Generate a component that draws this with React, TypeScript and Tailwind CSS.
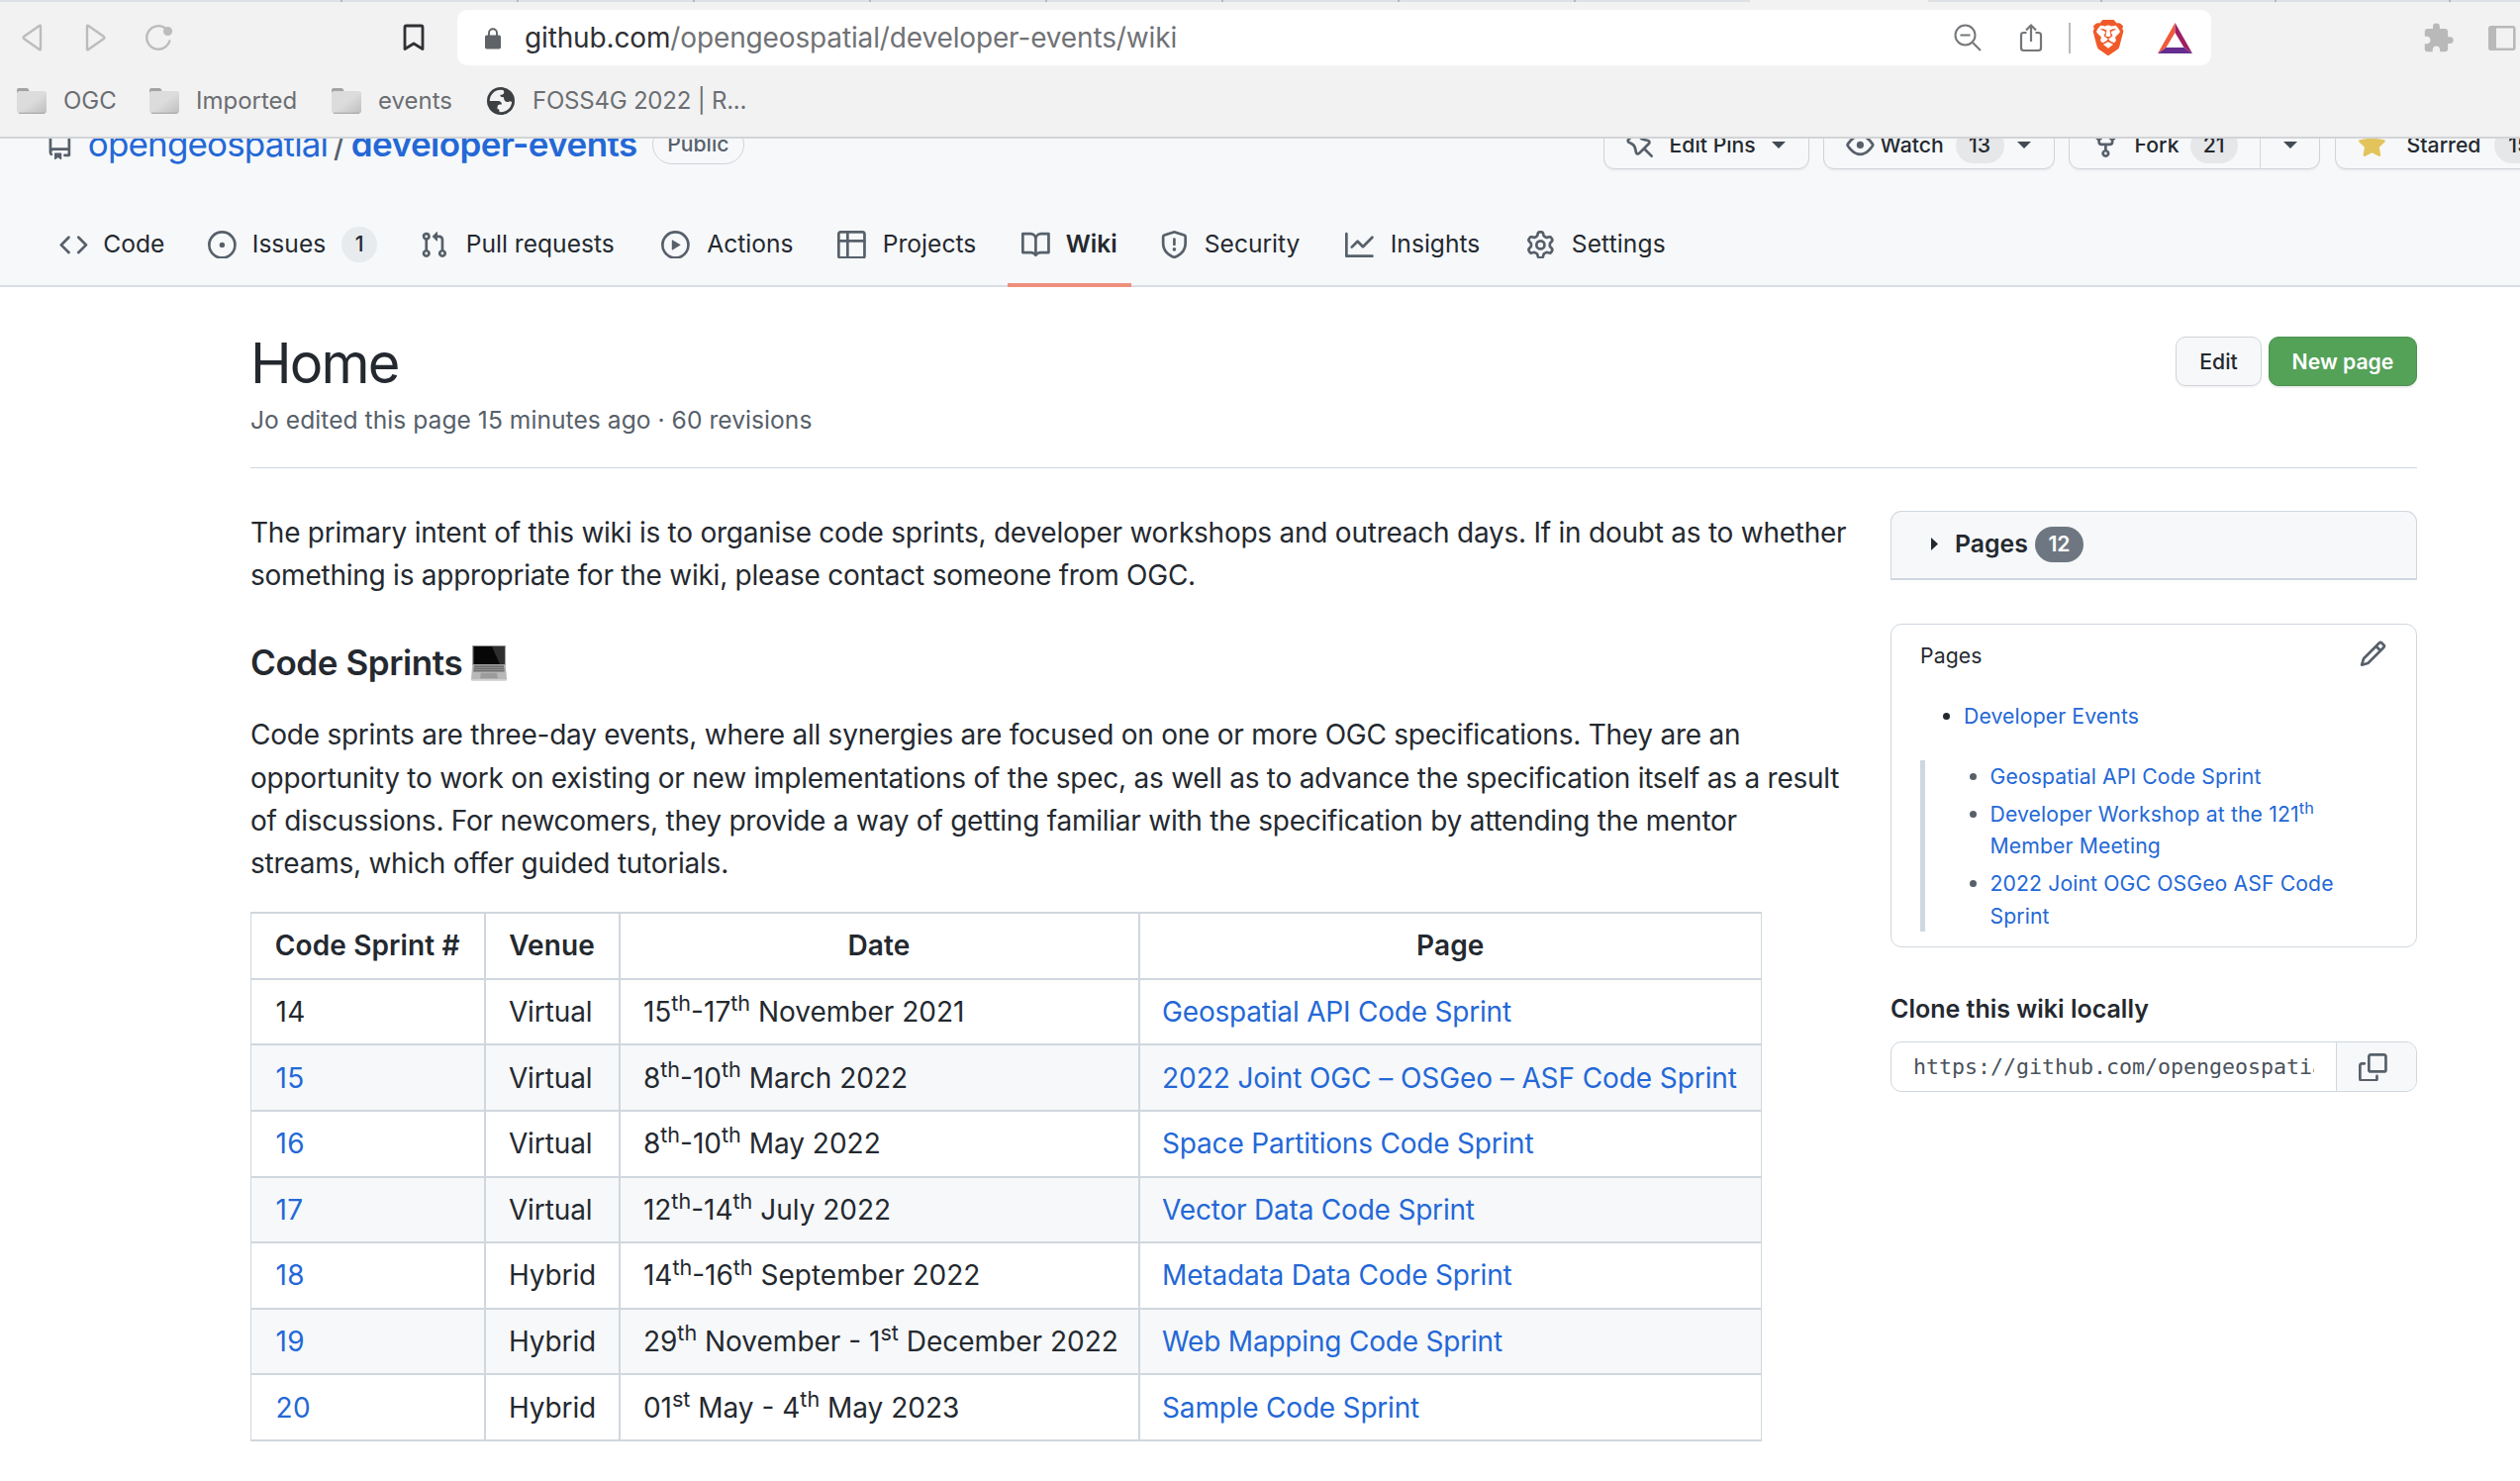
import React from "react";
import { SiBrave } from "react-icons/si";
import { MdExtension } from "react-icons/md";

const P = {
  code: "M4.72 3.22a.75.75 0 011.06 1.06L2.06 8l3.72 3.72a.75.75 0 11-1.06 1.06L.47 8.53a.75.75 0 010-1.06l4.25-4.25zm6.56 0a.75.75 0 10-1.06 1.06L13.94 8l-3.72 3.72a.75.75 0 101.06 1.06l4.25-4.25a.75.75 0 000-1.06l-4.25-4.25z",
  issue: "M8 9.5a1.5 1.5 0 100-3 1.5 1.5 0 000 3zM8 0a8 8 0 100 16A8 8 0 008 0zM1.5 8a6.5 6.5 0 1113 0 6.5 6.5 0 01-13 0z",
  pull: "M7.177 3.073L9.573.677A.25.25 0 0110 .854v4.792a.25.25 0 01-.427.177L7.177 3.427a.25.25 0 010-.354zM3.75 2.5a.75.75 0 100 1.5.75.75 0 000-1.5zm-2.25.75a2.25 2.25 0 113 2.122v5.256a2.251 2.251 0 11-1.5 0V5.372A2.25 2.25 0 011.5 3.25zM11 2.5h-1V4h1a1 1 0 011 1v5.628a2.251 2.251 0 101.5 0V5A2.5 2.5 0 0011 2.5zm1 10.25a.75.75 0 111.5 0 .75.75 0 01-1.5 0zM3.75 12a.75.75 0 100 1.5.75.75 0 000-1.5z",
  play: "M1.5 8a6.5 6.5 0 1113 0 6.5 6.5 0 01-13 0zM8 0a8 8 0 100 16A8 8 0 008 0zM6.379 5.227A.25.25 0 006 5.442v5.117a.25.25 0 00.379.214l4.264-2.559a.25.25 0 000-.428L6.379 5.227z",
  table: "M0 1.75C0 .784.784 0 1.75 0h12.5C15.216 0 16 .784 16 1.75v3.585a.746.746 0 010 .83v8.085A1.75 1.75 0 0114.25 16H6.309a.748.748 0 01-1.118 0H1.75A1.75 1.75 0 010 14.25V6.165a.746.746 0 010-.83V1.75zM1.5 6.5v7.75c0 .138.112.25.25.25H5v-8H1.5zM5 5H1.5V1.75a.25.25 0 01.25-.25H5V5zm1.5 1.5v8h7.75a.25.25 0 00.25-.25V6.5h-8zm8-1.5h-8V1.5h7.75a.25.25 0 01.25.25V5z",
  book: "M0 1.75A.75.75 0 01.75 1h4.253c1.227 0 2.317.59 3 1.501A3.744 3.744 0 0111.006 1h4.245a.75.75 0 01.75.75v10.5a.75.75 0 01-.75.75h-4.507a2.25 2.25 0 00-1.591.659l-.622.621a.75.75 0 01-1.06 0l-.622-.621A2.25 2.25 0 005.258 13H.75a.75.75 0 01-.75-.75V1.75zm8.755 3a2.25 2.25 0 012.25-2.25H14.5v9h-3.757c-.71 0-1.4.201-1.992.572l.004-7.322zm-1.504 7.324l.004-5.073-.002-2.253A2.25 2.25 0 005.003 2.5H1.5v9h3.757a3.75 3.75 0 011.994.574z",
  shield: "M7.467.133a1.75 1.75 0 011.066 0l5.25 1.68A1.75 1.75 0 0115 3.48V7c0 1.566-.32 3.182-1.303 4.682-.983 1.498-2.585 2.813-5.032 3.855a1.7 1.7 0 01-1.33 0c-2.447-1.042-4.049-2.357-5.032-3.855C1.32 10.182 1 8.566 1 7V3.48a1.75 1.75 0 011.217-1.667l5.25-1.68zm.61 1.429a.25.25 0 00-.153 0l-5.25 1.68a.25.25 0 00-.174.238V7c0 1.358.275 2.666 1.057 3.86.784 1.194 2.121 2.34 4.366 3.297a.2.2 0 00.154 0c2.245-.956 3.582-2.104 4.366-3.298C13.225 9.666 13.5 8.36 13.5 7V3.48a.25.25 0 00-.174-.237l-5.25-1.68zM9 10.5a1 1 0 11-2 0 1 1 0 012 0zm-.25-5.75a.75.75 0 10-1.5 0v3a.75.75 0 001.5 0v-3z",
  graph: "M1.5 1.75a.75.75 0 00-1.5 0v12.5c0 .414.336.75.75.75h14.5a.75.75 0 000-1.5H1.5V1.75zm14.28 2.53a.75.75 0 00-1.06-1.06L10 7.94 7.53 5.47a.75.75 0 00-1.06 0L3.22 8.72a.75.75 0 001.06 1.06L7 7.06l2.47 2.47a.75.75 0 001.06 0l5.25-5.25z",
  gear: "M7.429 1.525a6.593 6.593 0 011.142 0c.036.003.108.036.137.146l.289 1.105c.147.56.55.967.997 1.189.174.086.341.183.501.29.417.278.97.423 1.53.27l1.102-.303c.11-.03.175.016.195.046.219.31.41.641.573.989.014.031.022.11-.059.19l-.815.806c-.411.406-.562.957-.53 1.456a4.588 4.588 0 010 .582c-.032.499.119 1.05.53 1.456l.815.806c.08.08.073.159.059.19a6.494 6.494 0 01-.573.99c-.02.029-.086.074-.195.045l-1.103-.303c-.559-.153-1.112-.008-1.529.27-.16.107-.327.204-.5.29-.449.222-.851.628-.998 1.189l-.289 1.105c-.029.11-.101.143-.137.146a6.613 6.613 0 01-1.142 0c-.036-.003-.108-.037-.137-.146l-.289-1.105c-.147-.56-.55-.967-.997-1.189a4.502 4.502 0 01-.501-.29c-.417-.278-.97-.423-1.53-.27l-1.102.303c-.11.03-.175-.016-.195-.046a6.492 6.492 0 01-.573-.989c-.014-.031-.022-.11.059-.19l.815-.806c.411-.406.562-.957.53-1.456a4.587 4.587 0 010-.582c.032-.499-.119-1.05-.53-1.456l-.815-.806c-.08-.08-.073-.159-.059-.19a6.44 6.44 0 01.573-.99c.02-.029.086-.075.195-.045l1.103.303c.559.153 1.112.008 1.529-.27.16-.107.327-.204.5-.29.449-.222.851-.628.998-1.189l.289-1.105c.029-.11.101-.143.137-.146zM8 0c-.236 0-.47.01-.701.03-.743.065-1.29.615-1.458 1.261l-.29 1.106c-.017.066-.078.158-.211.224a5.994 5.994 0 00-.668.386c-.123.082-.233.09-.3.071L3.27 2.776c-.644-.177-1.392.02-1.82.63a7.977 7.977 0 00-.704 1.217c-.315.675-.111 1.422.363 1.891l.815.806c.05.048.098.147.088.294a6.084 6.084 0 000 .772c.01.147-.038.246-.088.294l-.815.806c-.474.469-.678 1.216-.363 1.891.2.428.436.835.704 1.218.428.609 1.176.806 1.82.63l1.103-.303c.066-.019.176-.011.299.071.213.143.436.272.668.386.133.066.194.158.212.224l.289 1.106c.169.646.715 1.196 1.458 1.26a8.094 8.094 0 001.402 0c.743-.064 1.29-.614 1.458-1.26l.29-1.106c.017-.066.078-.158.211-.224a5.98 5.98 0 00.668-.386c.123-.082.233-.09.3-.071l1.102.302c.644.177 1.392-.02 1.82-.63.268-.382.505-.789.704-1.217.315-.675.111-1.422-.364-1.891l-.814-.806c-.05-.048-.098-.147-.088-.294a6.1 6.1 0 000-.772c-.01-.147.039-.246.088-.294l.814-.806c.475-.469.679-1.216.364-1.891a7.992 7.992 0 00-.704-1.218c-.428-.609-1.176-.806-1.82-.63l-1.103.303c-.066.019-.176.011-.299-.071a5.991 5.991 0 00-.668-.386c-.133-.066-.194-.158-.212-.224L10.16 1.29C9.99.645 9.444.095 8.701.031A8.094 8.094 0 008 0zm1.5 8a1.5 1.5 0 11-3 0 1.5 1.5 0 013 0zM11 8a3 3 0 11-6 0 3 3 0 016 0z",
  pencil: "M11.013 1.427a1.75 1.75 0 012.474 0l1.086 1.086a1.75 1.75 0 010 2.474l-8.61 8.61c-.21.21-.47.364-.756.445l-3.251.93a.75.75 0 01-.927-.928l.929-3.25a1.75 1.75 0 01.445-.758l8.61-8.61zm1.414 1.06a.25.25 0 00-.354 0L10.811 3.75l1.439 1.44 1.263-1.263a.25.25 0 000-.354l-1.086-1.086zM11.189 6.25L9.75 4.81l-6.286 6.287a.25.25 0 00-.064.108l-.558 1.953 1.953-.558a.249.249 0 00.108-.064l6.286-6.286z",
  copy: "M0 6.75C0 5.784.784 5 1.75 5h1.5a.75.75 0 010 1.5h-1.5a.25.25 0 00-.25.25v7.5c0 .138.112.25.25.25h7.5a.25.25 0 00.25-.25v-1.5a.75.75 0 011.5 0v1.5A1.75 1.75 0 019.25 16h-7.5A1.75 1.75 0 010 14.25v-7.5zM5 1.75C5 .784 5.784 0 6.75 0h7.5C15.216 0 16 .784 16 1.75v7.5A1.75 1.75 0 0114.25 11h-7.5A1.75 1.75 0 015 9.25v-7.5zm1.75-.25a.25.25 0 00-.25.25v7.5c0 .138.112.25.25.25h7.5a.25.25 0 00.25-.25v-7.5a.25.25 0 00-.25-.25h-7.5z",
  eye: "M1.679 7.932c.412-.621 1.242-1.75 2.366-2.717C5.175 4.242 6.527 3.5 8 3.5c1.473 0 2.824.742 3.955 1.715 1.124.967 1.954 2.096 2.366 2.717a.119.119 0 010 .136c-.412.621-1.242 1.75-2.366 2.717C10.825 11.758 9.473 12.5 8 12.5c-1.473 0-2.824-.742-3.955-1.715C2.92 9.818 2.09 8.69 1.679 8.068a.119.119 0 010-.136zM8 2c-1.981 0-3.67.992-4.933 2.078C1.797 5.169.88 6.423.43 7.1a1.619 1.619 0 000 1.798c.45.678 1.367 1.932 2.637 3.024C4.329 13.008 6.019 14 8 14c1.981 0 3.67-.992 4.933-2.078 1.27-1.091 2.187-2.345 2.637-3.023a1.619 1.619 0 000-1.798c-.45-.678-1.367-1.932-2.637-3.023C11.671 2.992 9.981 2 8 2zm0 8a2 2 0 100-4 2 2 0 000 4z",
  pin: "M4.456.734a1.75 1.75 0 012.826.504l.613 1.327a3.081 3.081 0 002.084 1.707l2.454.584c1.332.317 1.8 1.972.832 2.94L11.06 10l3.72 3.72a.75.75 0 11-1.061 1.06L10 11.06l-2.204 2.205c-.968.968-2.623.5-2.94-.832l-.584-2.454a3.081 3.081 0 00-1.707-2.084l-1.327-.613a1.75 1.75 0 01-.504-2.826L4.456.734zM5.92 1.866a.25.25 0 00-.404-.072L1.794 5.516a.25.25 0 00.072.404l1.328.613A4.582 4.582 0 015.73 9.63l.584 2.454a.25.25 0 00.42.12l5.47-5.47a.25.25 0 00-.12-.42L9.63 5.73a4.581 4.581 0 01-3.098-2.537L5.92 1.866z",
  fork: "M5 3.25a.75.75 0 11-1.5 0 .75.75 0 011.5 0zm0 2.122a2.25 2.25 0 10-1.5 0v.878A2.25 2.25 0 005.75 8.5h1.5v2.128a2.251 2.251 0 101.5 0V8.5h1.5a2.25 2.25 0 002.25-2.25v-.878a2.25 2.25 0 10-1.5 0v.878a.75.75 0 01-.75.75h-4.5A.75.75 0 015 6.25v-.878zm3.75 7.378a.75.75 0 11-1.5 0 .75.75 0 011.5 0zm3-8.75a.75.75 0 100-1.5.75.75 0 000 1.5z",
  star: "M8 .25a.75.75 0 01.673.418l1.882 3.815 4.21.612a.75.75 0 01.416 1.279l-3.046 2.97.719 4.192a.75.75 0 01-1.088.791L8 12.347l-3.766 1.98a.75.75 0 01-1.088-.79l.72-4.194L.818 6.374a.75.75 0 01.416-1.28l4.21-.611L7.327.668A.75.75 0 018 .25z",
  repo: "M2 2.5A2.5 2.5 0 014.5 0h8.75a.75.75 0 01.75.75v12.5a.75.75 0 01-.75.75h-2.5a.75.75 0 110-1.5h1.75v-2h-8a1 1 0 00-.714 1.7.75.75 0 01-1.072 1.05A2.495 2.495 0 012 11.5v-9zm10.5-1V9h-8c-.356 0-.694.074-1 .208V2.5a1 1 0 011-1h8zM5 12.25v3.25a.25.25 0 00.4.2l1.45-1.087a.25.25 0 01.3 0L8.6 15.7a.25.25 0 00.4-.2v-3.25a.25.25 0 00-.25-.25h-3.5a.25.25 0 00-.25.25z",
};

function Oct({ d, className = "fill-[#57606a]" }: { d: string; className?: string }) {
  return (
    <svg viewBox="0 0 16 16" className={"size-[28.8px] shrink-0 " + className}>
      <path fillRule="evenodd" d={d} />
    </svg>
  );
}

function Caret({ className = "" }: { className?: string }) {
  return (
    <svg viewBox="0 0 14 7" className={"h-[7px] w-[14px] shrink-0 fill-[#424a53] " + className}>
      <path d="M0 0h14L7 7z" />
    </svg>
  );
}

function Folder() {
  return (
    <svg viewBox="0 0 32 28" className="h-[28px] w-[32px] shrink-0">
      <defs>
        <linearGradient id="fold" x1="0" y1="0" x2="1" y2="1">
          <stop offset="0" stopColor="#dcdcdc" />
          <stop offset=".5" stopColor="#dcdcdc" />
          <stop offset="1" stopColor="#bebebe" />
        </linearGradient>
      </defs>
      <path d="M1 6V3q0-2 2-2h8q1.500 0 2 1.500l.5 1.500V8H1z" fill="#a3a3a3" />
      <rect x="1" y="4" width="30" height="22.500" rx="2.500" fill="url(#fold)" />
      <path d="M3 26.300h26" stroke="#a8a8a8" strokeWidth="1.200" />
    </svg>
  );
}

function Globe() {
  return (
    <svg viewBox="0 0 28 28" className="size-[28px] shrink-0">
      <circle cx="14" cy="14" r="14" fill="#3c4043" />
      <circle cx="14" cy="14" r="11.200" fill="#f2f2f2" />
      <path d="M16.300 2.500l1 2.500q-.2 2.500-2.300 2.700h-1.500q-.5 2.300 1.500 2.300l2 .3q0 3.700 2.500 4.500 2.500.7 3.500-.5l2.500.7 1-4-4-7z" fill="#3c4043" />
      <path d="M2 14h9.500q3.200.2 3.500 3.500h-2.200q-2.300.2-2.300 2.700v2h1.500l1 4.300-6-1.500-5-7z" fill="#3c4043" />
    </svg>
  );
}

const seps = [
  "w-[344px]", "w-[176px]", "w-[176px]", "w-[176px]", "w-[176px]", "w-[176px]", "w-[176px]", "w-[176px]",
];

function BrowserChrome() {
  return (
    <div className="flex h-[140px] flex-col border-b-2 border-[#d2d4d7] bg-[#f2f2f2] text-[#6b6e72]">
      <div className="flex h-[2px] shrink-0 bg-[#dee1e5]">
        {seps.map((w, i) => (
          <div key={i} className={"box-content shrink-0 border-r-2 border-[#b4b8bd] " + w} />
        ))}
        <div className="w-[176px] shrink-0" />
        <div className="w-[180px] shrink-0 bg-[#f2f2f2]" />
        <div className="box-content w-[174px] shrink-0 border-r-2 border-[#b4b8bd]" />
        <div className="box-content w-[174px] shrink-0 border-r-2 border-[#b4b8bd]" />
        <div className="box-content w-[174px] shrink-0 border-r-2 border-[#b4b8bd]" />
      </div>
      <div className="flex h-[72px] shrink-0 items-center">
        <svg viewBox="0 0 180 30" className="ml-[20px] h-[30px] w-[180px] shrink-0 fill-none stroke-[#bcbcbc] stroke-[2.4]">
          <path d="M21 3.500v23q0 1.500-1.200.500L4 16q-1-1 0-2L19.800 3q1.200-1 1.200.500z" strokeLinejoin="round" />
          <path d="M68 3.500v23q0 1.500 1.200.500L85 16q1-1 0-2L69.200 3q-1.200-1-1.200.500z" strokeLinejoin="round" />
          <path d="M146.500 5.100A11.800 11.800 0 1 0 151.300 18.500" strokeLinecap="round" />
          <circle cx="149.500" cy="8.500" r="4.600" fill="#bcbcbc" stroke="none" />
        </svg>
        <svg viewBox="0 0 22 28" className="ml-[207px] h-[28px] w-[22px] shrink-0 fill-none stroke-[#303134] stroke-[2.8]">
          <path d="M2 3.500Q2 2 3.500 2h15Q20 2 20 3.500V25.500l-9-5.500-9 5.500z" strokeLinejoin="round" />
        </svg>
        <div className="ml-[33px] flex h-[56px] w-[1772px] shrink-0 items-center rounded-[10px] bg-white">
          <svg viewBox="0 0 16 22" className="ml-[28px] mt-px h-[22px] w-[16px] shrink-0">
            <rect x="0" y="7.500" width="16" height="14" rx="1.800" fill="#5f6368" />
            <path d="M4 8.500V5.200a4 4 0 0 1 8 0v3.300" fill="none" stroke="#5f6368" strokeWidth="1.900" />
          </svg>
          <div className="ml-[24px] w-[1420px] shrink-0 text-[28px] tracking-[-0.14px]">
            <span className="text-[#2f3033]">github.com</span>
            <span className="text-[#707275]">/opengeospatial/developer-events/wiki</span>
          </div>
          <svg viewBox="0 0 28 28" className="ml-[24px] h-[28px] w-[28px] shrink-0 fill-none stroke-[#747679] stroke-2">
            <circle cx="11.500" cy="11.500" r="10" />
            <path d="M6.500 11.500h10M19 19l8 8" />
          </svg>
          <svg viewBox="0 0 24 30" className="ml-[38px] h-[30px] w-[24px] shrink-0 fill-none stroke-[#747679] stroke-[2.2]">
            <path d="M7.500 10H4.500Q2 10 2 12.500v13Q2 28 4.500 28h15q2.500 0 2.500-2.500v-13Q22 10 19.500 10h-3M12 19V3M7 7.500l5-5 5 5" />
          </svg>
          <div className="ml-[26px] h-[31px] w-[2px] shrink-0 bg-[#b9bbbe]" />
          <SiBrave className="ml-[20px] size-[36px] shrink-0 text-[#f05a28]" />
          <svg viewBox="0 0 35 31" className="ml-[32px] h-[31px] w-[35px] shrink-0">
            <path d="M17.500 0v10L8.500 25 0 31z" fill="#f05a3c" />
            <path d="M17.500 0v10l9 15 8.500 6z" fill="#9e1f63" />
            <path d="M0 31l8.500-6h18l8.500 6z" fill="#662d91" />
          </svg>
        </div>
        <MdExtension className="ml-[213px] size-[33px] shrink-0 text-[#b9b9b9]" />
        <svg viewBox="0 0 28 25" className="ml-[34px] h-[25px] w-[28px] shrink-0 fill-none stroke-[#b9b9b9] stroke-[2.6]">
          <rect x="1.300" y="1.300" width="25" height="22.400" rx="1.500" />
          <path d="M2 2h6v21H2z" fill="#b9b9b9" stroke="none" />
        </svg>
      </div>
      <div className="flex h-[56px] shrink-0 items-center text-[24px]">
        <div className="flex w-[134px] shrink-0 items-center gap-[16px] pl-[16px]"><Folder /><span>OGC</span></div>
        <div className="flex w-[184px] shrink-0 items-center gap-[16px] pl-[16px]"><Folder /><span>Imported</span></div>
        <div className="flex w-[173px] shrink-0 items-center gap-[16px] pl-[16px]"><Folder /><span>events</span></div>
        <div className="flex shrink-0 items-center gap-[18px] pl-px tracking-[-0.22px]"><Globe /><span>FOSS4G 2022 | R...</span></div>
      </div>
    </div>
  );
}

const btn = "flex h-[50px] shrink-0 items-center rounded-[11px] border border-[#d0d4d8] bg-[#f6f8fa] pt-px text-[21.200px] font-medium text-[#24292f] shadow-[0_2px_0_rgba(27,31,36,0.04)]";
const count = "flex h-[36px] items-center justify-center rounded-full bg-[#e5e7e9]";

function RepoHeader() {
  return (
    <div className="h-[150px] overflow-hidden bg-[#f6f8fa]">
      <div className="-mt-[19px] flex h-[50px] items-center whitespace-nowrap">
        <Oct d={P.repo} className="ml-[46px] mt-[2px] fill-[#57606a]" />
        <div className="-mt-[3px] ml-[14px] flex w-[570px] shrink-0 items-center text-[35px] leading-[50px]">
          <span className="w-[242px] tracking-[-0.85px] text-[#2468d6]">opengeospatial</span>
          <span className="ml-[6px] w-[18px] text-[#57606a]">/</span>
          <span className="font-semibold tracking-[-0.55px] text-[#2468d6]">developer-events</span>
        </div>
        <div className="flex h-[40px] w-[93px] shrink-0 items-center justify-center rounded-full border border-[#d0d5da] text-[21.200px] font-medium text-[#57606a]">Public</div>
        <div className={btn + " ml-[868px] w-[208px]"}>
          <Oct d={P.pin} className="ml-[22px] fill-[#57606a]" />
          <span className="ml-[15px] w-[92px]">Edit Pins</span>
          <Caret className="ml-[11px]" />
        </div>
        <div className={btn + " ml-[14px] w-[234px]"}>
          <Oct d={P.eye} className="ml-[22px] fill-[#57606a]" />
          <span className="ml-[6px] w-[66px]">Watch</span>
          <span className={count + " ml-[10px] w-[49px]"}>13</span>
          <Caret className="ml-[13px]" />
        </div>
        <div className={btn + " ml-[14px] w-[254px]"}>
          <Oct d={P.fork} className="ml-[22px] fill-[#57606a]" />
          <span className="ml-[15px] w-[47px]">Fork</span>
          <span className={count + " ml-[9px] w-[48px]"}>21</span>
          <div className="ml-[22px] h-full w-px bg-[#d5d8dc]" />
          <Caret className="ml-[23px]" />
        </div>
        <div className={btn + " ml-[15px] w-[300px]"}>
          <Oct d={P.star} className="ml-[22px] fill-[#e3c35c]" />
          <span className="ml-[21px] w-[78px]">Starred</span>
          <span className={count + " ml-[10px] w-[60px]"}>151</span>
        </div>
      </div>
      <nav className="mt-[31px] flex h-[88px] items-stretch text-[24.600px] text-[#24292f] shadow-[inset_0_-2px_0_#d8dee4]">
        {tabs.map((t) => (
          <div key={t.label} className={"flex shrink-0 items-center " + t.w}>
            <Oct d={t.d} className="ml-[14.400px] fill-[#57606a]" />
            <span className={"-mt-[2px] " + t.ml}>{t.label}</span>
            {t.n && <span className="ml-[16px] flex size-[36px] items-center justify-center rounded-full bg-[#e7ebee] text-[21.200px] font-medium">{t.n}</span>}
          </div>
        ))}
      </nav>
    </div>
  );
}

const tabs = [
  { label: "Code", d: P.code, w: "w-[150px] ml-[45.600px] pt-[2px]", ml: "ml-[15.500px]" },
  { label: "Issues", d: P.issue, w: "w-[214px] pt-[2px]", ml: "ml-[16px]", n: "1" },
  { label: "Pull requests", d: P.pull, w: "w-[244px] pt-[2px]", ml: "ml-[18px]" },
  { label: "Actions", d: P.play, w: "w-[178px] pt-[2px]", ml: "ml-[17.500px]" },
  { label: "Projects", d: P.table, w: "w-[186.400px] pt-[2px]", ml: "ml-[17px]" },
  { label: "Wiki", d: P.book, w: "w-[125px] mr-[14.600px] border-b-4 border-[#ee907c] pt-[6px]", ml: "ml-[15.500px] font-semibold" },
  { label: "Security", d: P.shield, w: "w-[187px] pt-[2px]", ml: "ml-[16px]" },
  { label: "Insights", d: P.graph, w: "w-[183px] pt-[2px]", ml: "ml-[17px]" },
  { label: "Settings", d: P.gear, w: "w-[180px] pt-[2px]", ml: "ml-[17px] tracking-[0.100px]" },
];

const S = ({ children }: { children: React.ReactNode }) => (
  <sup className="relative top-[-0.5em] align-baseline text-[77%] leading-none">{children}</sup>
);

const rows: [string, string, React.ReactNode, string][] = [
  ["14", "Virtual", <>15<S>th</S>-17<S>th</S> November 2021</>, "Geospatial API Code Sprint"],
  ["15", "Virtual", <>8<S>th</S>-10<S>th</S> March 2022</>, "2022 Joint OGC – OSGeo – ASF Code Sprint"],
  ["16", "Virtual", <>8<S>th</S>-10<S>th</S> May 2022</>, "Space Partitions Code Sprint"],
  ["17", "Virtual", <>12<S>th</S>-14<S>th</S> July 2022</>, "Vector Data Code Sprint"],
  ["18", "Hybrid", <>14<S>th</S>-16<S>th</S> September 2022</>, "Metadata Data Code Sprint"],
  ["19", "Hybrid", <>29<S>th</S> November - 1<S>st</S> December 2022</>, "Web Mapping Code Sprint"],
  ["20", "Hybrid", <>01<S>st</S> May - 4<S>th</S> May 2023</>, "Sample Code Sprint"],
];

function Laptop() {
  return (
    <svg viewBox="0 0 36 36" className="ml-[9px] mt-[3px] size-[36px] shrink-0">
      <path d="M1.200 0h33.600v20H1.200z" fill="#8c8c8c" />
      <path d="M2.400 1h31.200v18H2.400z" fill="#070707" />
      <path d="M21 1h12.600v18H29z" fill="#2e2e2e" />
      <path d="M1.200 19.500h33.600L36 34q0 1.500-1 1.500H1Q0 35.500 0 34z" fill="#b8b8b8" />
      <path d="M3 20.300h30l.700 6.200H2.300z" fill="#6c6c6c" />
      <path d="M3 22.400h30M2.700 24.600h30.600" stroke="#a0a0a0" strokeWidth=".7" />
      <path d="M10 27.700h16l1 5.500H9z" fill="#9c9c9c" />
      <path d="M.300 34.700h35.400" stroke="#d6d6d6" />
    </svg>
  );
}

const cell = "border-2 border-[#d0d7de] px-[23.400px] pb-0 pt-[1px] first:border-l last:border-r ";

export default function App() {
  return (
    <div className="h-[1496px] w-[2546px] overflow-hidden bg-white font-['Inter',sans-serif] text-[#24292f]">
      <BrowserChrome />
      <RepoHeader />
      <main className="ml-[253px] w-[2189px]">
        <div className="flex h-[183px] justify-between border-b border-[#d0d7de]">
          <div>
            <h1 className="mt-[41px] h-[72px] text-[56px] leading-[72px] tracking-[-1.800px]">Home</h1>
            <div className="mt-[2px] text-[24.600px] leading-[38px] tracking-[0.040px] text-[#57606a]">Jo edited this page 15 minutes ago · 60 revisions</div>
          </div>
          <div className="mt-[50px] flex gap-[7px] text-[21.200px] font-medium">
            <div className="flex h-[50px] w-[87px] items-center justify-center rounded-[10px] border border-[#d0d4d8] bg-[#f6f8fa] pt-px shadow-[0_2px_0_rgba(27,31,36,0.04)]">Edit</div>
            <div className="flex h-[50px] w-[150px] items-center justify-center rounded-[10px] border border-[#4a9150] bg-[#54a158] pt-px font-semibold text-white shadow-[0_2px_0_rgba(27,31,36,0.08)]">New page</div>
          </div>
        </div>
        <div className="flex">
          <div className="w-[1657px] shrink-0">
            <p className="mt-[44px] w-[1640px] whitespace-nowrap text-[28px] leading-[43.200px] tracking-[-0.240px]">
              The primary intent of this wiki is to organise code sprints, developer workshops and outreach days. If in doubt as to whether<br />
              something is appropriate for the wiki, please contact someone from OGC.
            </p>
            <h3 className="mt-[43px] flex h-[45px] items-center text-[35px] font-semibold tracking-[-0.400px]">Code Sprints<Laptop /></h3>
            <p className="mt-[30px] w-[1640px] whitespace-nowrap text-[28px] leading-[43.200px] tracking-[-0.240px]">
              Code sprints are three-day events, where all synergies are focused on one or more OGC specifications. They are an<br />
              opportunity to work on existing or new implementations of the spec, as well as to advance the specification itself as a result<br />
              of discussions. For newcomers, they provide a way of getting familiar with the specification by attending the mentor<br />
              streams, which offer guided tutorials.
            </p>
            <table className="mt-[27px] w-[1527px] table-fixed border-collapse whitespace-nowrap text-[28px] leading-[43.200px]">
              <colgroup>
                <col className="w-[236px]" /><col className="w-[136px]" /><col className="w-[525px]" /><col />
              </colgroup>
              <thead>
                <tr className="h-[66.600px]">
                  {["Code Sprint #", "Venue", "Date", "Page"].map((h) => (
                    <th key={h} className={cell + "text-center font-semibold tracking-[0.120px]"}>{h}</th>
                  ))}
                </tr>
              </thead>
              <tbody>
                {rows.map(([n, v, d, p]) => (
                  <tr key={n} className="h-[66.600px] even:bg-[#f6f8fa]">
                    <td className={cell + "pl-[24.500px]! tracking-[0.300px] " + (n === "14" ? "" : "text-[#2468d6]")}>{n}</td>
                    <td className={cell + "tracking-[-0.100px]"}>{v}</td>
                    <td className={cell}>{d}</td>
                    <td className={cell + "pl-[22.600px]! text-[#2468d6] " + (n === "15" ? "tracking-[-0.090px]" : "tracking-[-0.200px]")}>{p}</td>
                  </tr>
                ))}
              </tbody>
            </table>
          </div>
          <aside className="w-[532px] shrink-0">
            <div className="mt-[43px] flex h-[70px] items-center rounded-t-[11px] border border-b-2 border-[#d0d7de] bg-[#f6f8fa] pb-px text-[24.800px] font-semibold">
              <svg viewBox="0 0 7 13" className="-mt-[2px] ml-[40px] h-[13px] w-[7px] fill-[#24292f]"><path d="M0 0l7 6.500L0 13z" /></svg>
              <span className="ml-[17px] w-[74px]">Pages</span>
              <span className="ml-[7px] flex h-[36px] w-[49px] items-center justify-center rounded-full bg-[#6e7781] text-[21.200px] text-white">12</span>
            </div>
            <div className="mt-[44px] h-[327px] rounded-[11px] border border-[#d0d7de] pl-[29px] pr-[29px] text-[21.200px] leading-[32.400px] tracking-[0.120px]">
              <div className="mt-[15px] flex items-center justify-between"><span>Pages</span><Oct d={P.pencil} className="-mt-[3px] fill-[#57606a]" /></div>
              <ul className="mt-[29px] list-disc pl-[44px]"><li><a className="text-[#2468d6]">Developer Events</a></li></ul>
              <div className="mt-[28px] h-[173px] border-l-[5px] border-[#d0d7de] pl-[22px] text-[#57606a]">
                <ul className="list-disc pl-[43.500px]">
                  <li><a className="text-[#2468d6]">Geospatial API Code Sprint</a></li>
                  <li className="mt-[5.500px]"><a className="text-[#2468d6]">Developer Workshop at the 121<S>th</S><br />Member Meeting</a></li>
                  <li className="mt-[5.800px]"><a className="text-[#2468d6]">2022 Joint OGC OSGeo ASF Code<br />Sprint</a></li>
                </ul>
              </div>
            </div>
            <h5 className="mt-[43px] text-[25px] font-semibold leading-[38px]">Clone this wiki locally</h5>
            <div className="mt-[14px] flex h-[51px] overflow-hidden rounded-[11px] border border-[#d0d7de]">
              <div className="flex w-[449px] items-center pl-[22px] pt-px font-['DejaVu_Sans_Mono',monospace] text-[21.600px] text-[#4a525b]">
                <span className="w-[405px] overflow-hidden whitespace-nowrap">https://github.com/opengeospatial/developer-events.wiki.git</span>
              </div>
              <div className="flex flex-1 items-center justify-center border-l border-[#d0d7de] bg-[#f6f8fa] pr-[7px] pt-px"><Oct d={P.copy} /></div>
            </div>
          </aside>
        </div>
      </main>
    </div>
  );
}
